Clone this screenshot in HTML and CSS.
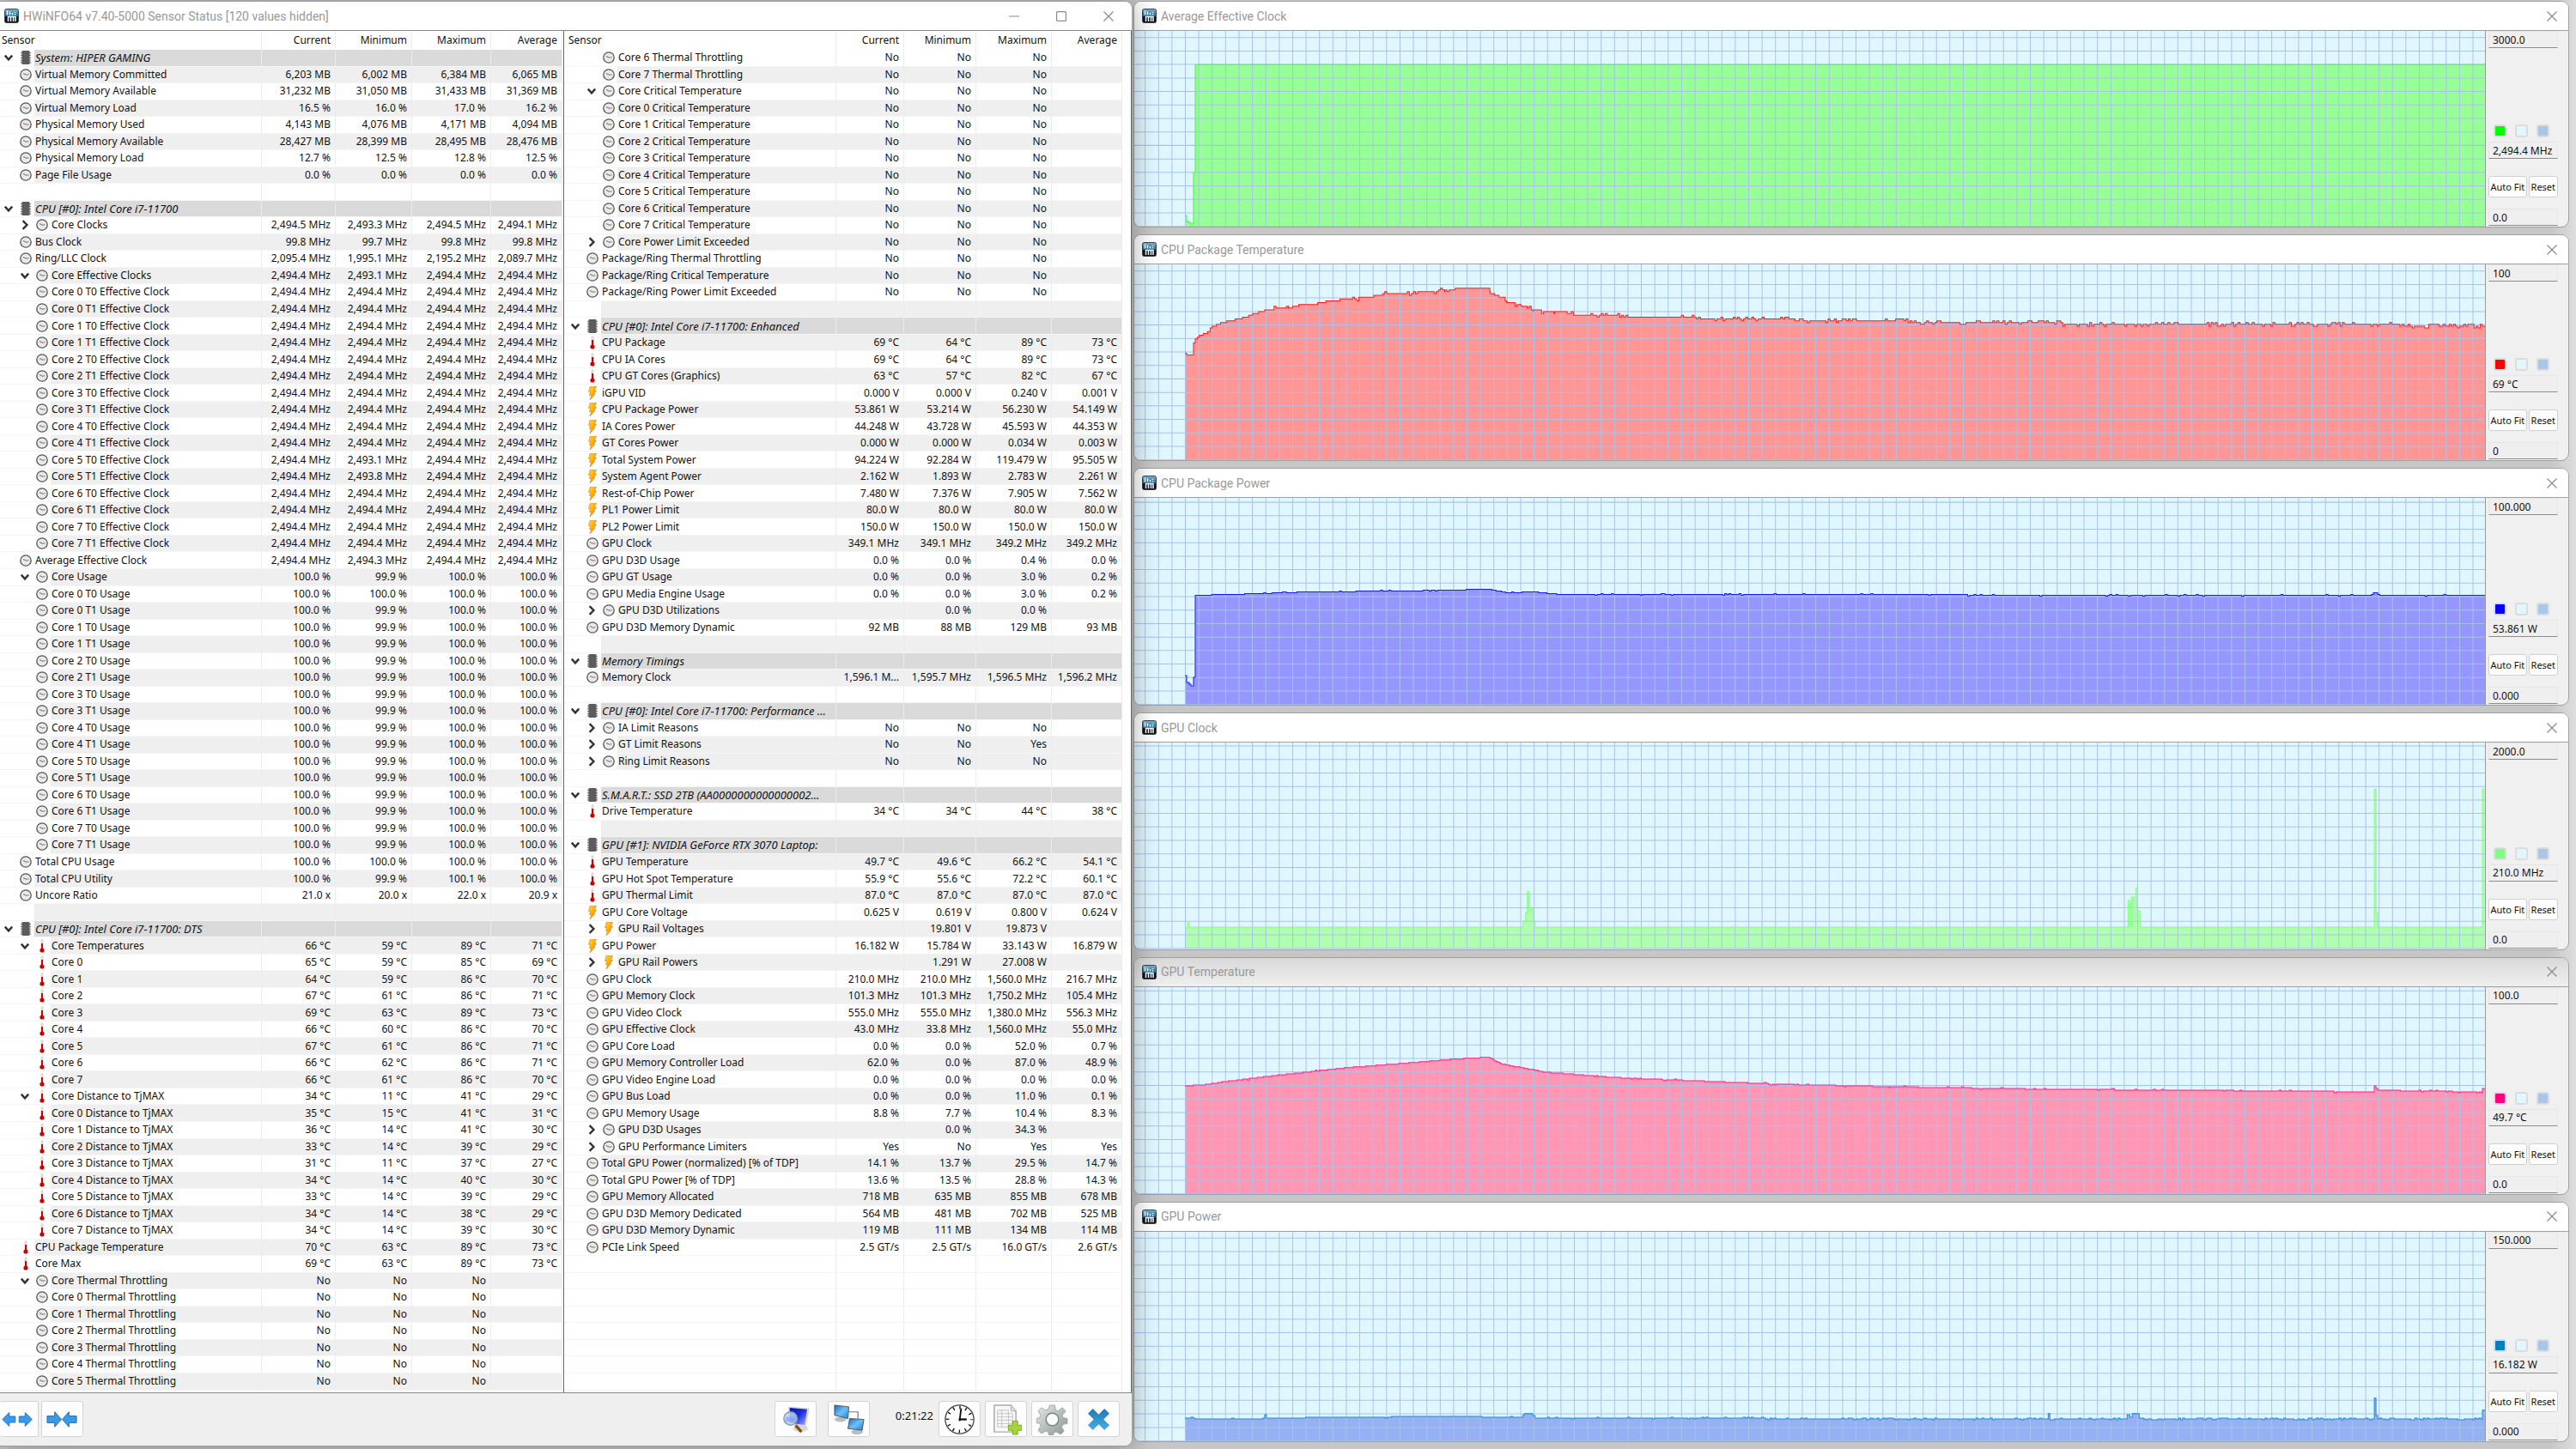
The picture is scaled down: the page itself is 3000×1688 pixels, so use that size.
FILE: index.html
```
<!DOCTYPE html>
<html lang="en">
<head>
  <meta charset="UTF-8">
  <meta name="viewport" content="width=device-width, initial-scale=1.0">
  <title>HWiNFO64 Sensor Status</title>
  <link rel="stylesheet" href="styles.css">
</head>
<body>
  <!-- shared icons -->
  <svg class="defs" aria-hidden="true">
    <defs>
      <linearGradient id="gApp" x1="0" y1="0" x2="0" y2="1">
        <stop offset="0" stop-color="#7fb8d6"/><stop offset=".5" stop-color="#1b6fa3"/><stop offset=".52" stop-color="#0b1420"/><stop offset="1" stop-color="#111"/>
      </linearGradient>
      <linearGradient id="gBolt" x1="0" y1="0" x2="1" y2="1">
        <stop offset="0" stop-color="#ffd84a"/><stop offset=".5" stop-color="#ffb000"/><stop offset="1" stop-color="#e87800"/>
      </linearGradient>
      <linearGradient id="gScreen" x1="0" y1="0" x2="1" y2="1">
        <stop offset="0" stop-color="#1668c0"/><stop offset=".5" stop-color="#6fc0f5"/><stop offset="1" stop-color="#1e7fd6"/>
      </linearGradient>
      <linearGradient id="gNavy" x1="0" y1="0" x2="1" y2="1">
        <stop offset="0" stop-color="#0a14a8"/><stop offset=".5" stop-color="#1c2fe0"/><stop offset="1" stop-color="#a8b8ff"/>
      </linearGradient>
      <linearGradient id="gGear" x1="0" y1="0" x2="1" y2="1">
        <stop offset="0" stop-color="#e4e8e8"/><stop offset="1" stop-color="#8e9696"/>
      </linearGradient>
      <linearGradient id="gClose" x1="0" y1="0" x2="0" y2="1">
        <stop offset="0" stop-color="#1f7ab4"/><stop offset="1" stop-color="#46aee4"/>
      </linearGradient>
    </defs>
    <symbol id="app" viewBox="0 0 17 17">
      <rect x=".5" y=".5" width="16" height="16" rx="2" fill="url(#gApp)" stroke="#3a4650"/>
      <path d="M3.500 2.500v5M6.500 3.500v4M9.500 5v2.500M12.500 4v1M12.500 6v1.500" stroke="#fff" stroke-width="1.500"/>
      <path d="M4.500 9v6M7.500 9v6M10.500 9v6M13 9v6M4 9.500h9.500" stroke="#fff" stroke-width="1.500"/>
    </symbol>
    <symbol id="clock" viewBox="0 0 14 14">
      <circle cx="7" cy="7" r="6.200" fill="#e9e9e9" stroke="#555" stroke-width="1.300"/>
      <path d="M4 5.500L7.500 7.200L10.500 6.800" fill="none" stroke="#8a7468" stroke-width="1.100"/>
    </symbol>
    <symbol id="temp" viewBox="0 0 14 16">
      <rect x="5.500" y="0" width="3" height="12" rx="1.500" fill="#dcdcdc"/>
      <rect x="6" y="5" width="2" height="8" fill="#d40000"/>
      <circle cx="7" cy="13" r="2.600" fill="#cc0000"/>
    </symbol>
    <symbol id="bolt" viewBox="0 0 14 16">
      <path d="M4 .5L11.500 0L9.500 5L11.500 5L8.500 9.500L9.800 9.500L4 16L5.500 10.500L3.500 10.500L4.500 6.500L2.500 6.500Z" fill="url(#gBolt)" stroke="#c9862a" stroke-width=".6"/>
    </symbol>
    <symbol id="chip" viewBox="0 0 14 16">
      <path d="M1 2.500h12M1 5.500h12M1 8.500h12M1 11.500h12M1 14h12" stroke="#888" stroke-width="1.300"/>
      <rect x="2.500" y="0" width="9" height="16" rx="1" fill="#5c5c5c"/>
    </symbol>
    <symbol id="open" viewBox="0 0 10 10"><path d="M1.500 3L5 7L8.500 3" fill="none" stroke="#333" stroke-width="2"/></symbol>
    <symbol id="shut" viewBox="0 0 10 10"><path d="M3 1L7 5L3 9" fill="none" stroke="#333" stroke-width="2"/></symbol>
    <symbol id="close" viewBox="0 0 12 12"><path d="M.5 .5L11.500 11.500M11.500 .5L.5 11.500" fill="none" stroke="#8a8a8a" stroke-width="1.200"/></symbol>
  </svg>

  <main class="sensors">
    <header class="titlebar">
      <svg class="app-icon"><use href="#app"/></svg>
      <h1>HWiNFO64 v7.40-5000 Sensor Status [120 values hidden]</h1>
      <div class="caption">
        <button aria-label="Minimize"><svg viewBox="0 0 12 12"><path d="M0 6h12" stroke="#8a8a8a"/></svg></button>
        <button aria-label="Maximize"><svg viewBox="0 0 12 12"><rect x=".6" y=".6" width="10.800" height="10.800" rx="1" fill="none" stroke="#8a8a8a" stroke-width="1.200"/></svg></button>
        <button aria-label="Close"><svg><use href="#close"/></svg></button>
      </div>
    </header>

    <div class="panes">
      <div class="pane pane-left"><table id="left"></table></div>
      <div class="pane pane-right"><table id="right"></table></div>
    </div>

    <footer class="toolbar">
      <button class="tool tool-edge" aria-label="Expand columns">
        <svg viewBox="0 0 42 20"><path d="M1 10L10 1V6H18V14H10V19ZM40 10L31 1V6H23V14H31V19Z" fill="#3a9ae8" stroke="#1c6cb4"/></svg>
      </button>
      <button class="tool" aria-label="Shrink columns">
        <svg viewBox="0 0 38 20"><path d="M18 10L10 1V6H1V14H10V19ZM19 10L27 1V6H36V14H27V19Z" fill="#3a9ae8" stroke="#1c6cb4"/></svg>
      </button>
      <span class="spacer"></span>
      <button class="tool tool-search" aria-label="Sensor details">
        <svg viewBox="0 0 34 34">
          <ellipse cx="23" cy="28" rx="9" ry="4" fill="#d8d8d8"/>
          <path d="M9 2L33 4L29 26L9 22Z" fill="#e6e6ea" stroke="#bbb" stroke-width=".6"/>
          <path d="M10 3L31 5L28 24L10 21Z" fill="url(#gNavy)"/>
          <path d="M17 24L24 32" stroke="#8a4b14" stroke-width="3.500"/>
          <circle cx="11" cy="16" r="8" fill="#bcd6f4" fill-opacity=".85" stroke="#8598b4" stroke-width="1.500"/>
          <path d="M5 14h12v6H5Z" fill="#7c9cf0" opacity=".6"/>
        </svg>
      </button>
      <button class="tool tool-net" aria-label="Remote sensors">
        <svg viewBox="0 0 38 36">
          <path d="M18 9h12v8" fill="none" stroke="#777" stroke-width="1.200"/>
          <ellipse cx="9" cy="18" rx="7" ry="3" fill="#b9bdc0"/><ellipse cx="29" cy="33" rx="7" ry="3" fill="#b9bdc0"/>
          <path d="M2 1L19 3L18 17L2 13Z" fill="url(#gScreen)" stroke="#555"/>
          <path d="M20 17L37 18L35 31L18 29Z" fill="url(#gScreen)" stroke="#555"/>
        </svg>
      </button>
      <time class="elapsed">0:21:22</time>
      <button class="tool" aria-label="Reset clock">
        <svg viewBox="0 0 40 40">
          <circle cx="20" cy="20" r="18" fill="#fff" stroke="#444" stroke-width="1.400"/>
          <circle cx="20" cy="20" r="15" fill="none" stroke="#111" stroke-width="4" stroke-dasharray="1.500 6.354" stroke-dashoffset=".75"/>
          <path d="M20 22L22 6" stroke="#111" stroke-width="2"/><path d="M19 20h10" stroke="#111" stroke-width="2.500"/>
        </svg>
      </button>
      <button class="tool" aria-label="Start logging">
        <svg viewBox="0 0 36 38">
          <path d="M4 2h20l6 7v25H4Z" fill="#f8f8f8" stroke="#aaa" stroke-width="1.500"/>
          <path d="M24 2v7h6" fill="#ddd" stroke="#aaa"/>
          <path d="M8 8h13M8 12h18M8 16h18M8 20h18M8 24h18M8 28h18M8 8v20M13 8v20M21 8v20M26 12v16" stroke="#c4c4c4"/>
          <path d="M26 21h6v5h5v6h-5v5h-6v-5h-5v-6h5Z" fill="#a5d63c" stroke="#74a81c"/>
        </svg>
      </button>
      <button class="tool" aria-label="Settings">
        <svg viewBox="0 0 38 38">
          <g fill="url(#gGear)" stroke="#8b9393" stroke-width=".7">
            <path d="M16 2h6l1 6 3 1 5-4 4 4-4 5 1 3 5 1v6l-5 1-2 3 3 5-4 4-5-3-3 1-1 3h-5l-1-4-3-1-5 3-4-4 3-5-1-3-4-1v-5l4-1 1-3-3-5 4-4 5 3 3-1Z"/>
          </g>
          <circle cx="19" cy="19" r="7.500" fill="#fdfdfd" stroke="#7a8282" stroke-width="1.500"/>
        </svg>
      </button>
      <button class="tool" aria-label="Close sensors">
        <svg viewBox="0 0 28 28"><path d="M7 1L14 8L21 1L27 7L20 14L27 21L21 27L14 20L7 27L1 21L8 14L1 7Z" fill="url(#gClose)"/></svg>
      </button>
    </footer>
  </main>

  <section class="graphs" id="graphs"></section>

  <script src="app.js"></script>
</body>
</html>
```
FILE: styles.css
```
* {
  box-sizing: border-box;
}

body {
  margin: 0;
  height: 100vh;
  display: grid;
  grid-template-columns: 44% 1fr;
  background: linear-gradient(to right, #c6c6c6 99%, #dedede);
  font-family: "Noto Sans", sans-serif;
  font-size: 12px;
  color: #111;
  overflow: hidden;
}

button,
input {
  font: inherit;
  color: inherit;
}

.defs {
  position: absolute;
  width: 0;
  height: 0;
}

/* windows */
.sensors,
.graph {
  background: #f0f0f0;
  border: 1px solid #a0a0a0;
  overflow: hidden;
}

.sensors {
  position: relative;
  z-index: 1;
  margin: 1px 1px 3px 0;
  border-left: 0;
  border-radius: 0 9px 9px 0;
  display: grid;
  grid-template-rows: 33px 1fr 61px;
  min-height: 0;
  box-shadow: 0 0 32px rgba(0, 0, 0, .35);
}

.titlebar {
  display: flex;
  align-items: center;
  background: #fff;
  border-bottom: 1px solid #a0a0a0;
  padding-left: 9px;
}

.titlebar h1,
.titlebar h2 {
  margin: 0;
  flex: 1;
  font-family: Roboto, "Open Sans", sans-serif;
  font-size: 14px;
  font-weight: 400;
  color: #999;
  white-space: nowrap;
}

.app-icon {
  width: 17px;
  height: 17px;
  margin-right: 5px;
}

.sensors .titlebar {
  padding-left: 5px;
  border-bottom: 0;
}

.caption {
  display: flex;
}

.caption button {
  border: 0;
  background: none;
  width: 55px;
  padding: 0;
}

.graph .caption button {
  width: 38px;
}

.caption svg {
  width: 12px;
  height: 12px;
  display: block;
  margin: auto;
}

/* sensor lists */
.panes {
  display: grid;
  grid-template-columns: 657fr 661fr;
  border-top: 1px solid #888;
  border-bottom: 1px solid #888;
  background: #fff;
  min-height: 0;
}

.pane {
  min-width: 0;
  min-height: 0;
  padding-bottom: 2px;
  border-right: 1px solid #666;
}

.pane-left {
  --start: 0px;
  padding-right: 1px;
}

.pane-right {
  --start: 3px;
  padding-right: 10px;
}

.pane table {
  width: 100%;
  height: 100%;
  table-layout: fixed;
  border-spacing: 0;
}

.pane th,
.pane td {
  height: 19px;
  padding: 0 5px 0 0;
  border-right: 1px solid #ececec;
  border-bottom: 1px solid #f5f5f5;
  text-align: right;
  font-weight: 400;
  line-height: 16px;
  white-space: nowrap;
  overflow: hidden;
}

.pane thead th {
  height: 22px;
  border-bottom: 0;
}

.pane thead th:first-child {
  text-align: left;
  padding-left: calc(var(--start) + 2px);
}

.pane-left .c1 { width: 86px; }
.pane-left .c2 { width: 89px; }
.pane-left .c3 { width: 92px; }
.pane-left .c4 { width: 83px; }
.pane-right .c1 { width: 79px; }
.pane-right .c2 { width: 84px; }
.pane-right .c3 { width: 88px; }
.pane-right .c4 { width: 82px; }

.pane tbody th {
  text-align: left;
  padding: 0 0 0 calc(var(--start) + var(--indent));
  background: linear-gradient(to right, #fff calc(var(--start) + var(--indent) + 37px), var(--stripe) 0);
}

.pane td {
  background: var(--stripe);
}

.pane tbody tr {
  --indent: 3px;
  --stripe: #fff;
}

.pane tbody tr.nested {
  --indent: 22px;
}

.pane tbody tr.shade {
  --stripe: #efefef;
}

.pane tbody tr.group {
  --stripe: #dadada;
}

.group .label {
  font-size: 13px;
  font-style: italic;
}

.name {
  display: flex;
  align-items: center;
}

.toggle {
  width: 13px;
  height: 16px;
  margin-right: 7px;
  padding: 0;
  border: 0;
  background: none;
}

.toggle svg {
  display: block;
  width: 12px;
  height: 12px;
  margin: auto;
}

.icon {
  width: 14px;
  height: 16px;
  margin-right: 4px;
}

/* toolbar */
.toolbar {
  display: flex;
  align-items: flex-start;
  padding: 9px 14px 0 0;
  background: #efefef;
}

.tool {
  width: 49px;
  height: 42px;
  margin-right: 5px;
  padding: 0;
  border: 1px solid #d4d4d4;
  border-radius: 3px;
  background: #fdfdfd;
  display: flex;
  align-items: center;
  justify-content: center;
}

.tool:last-child {
  margin-right: 0;
}

.tool-edge {
  width: 45px;
  margin-right: 3px;
  padding-right: 4px;
  border-left: 0;
}

.tool svg {
  width: 37px;
  height: 37px;
}

.tool-search svg {
  width: 33px;
}

.tool:last-child svg {
  width: 27px;
}

.tool-search {
  margin-right: 13px;
}

.tool-net {
  margin-right: 30px;
}

.elapsed {
  font-size: 13px;
  line-height: 34px;
  margin-right: 6px;
}

.spacer {
  flex: 1;
}

/* graph windows */
.graphs {
  display: grid;
  grid-template-rows: 264fr 264fr 277fr 276fr 277fr 280fr;
  gap: 8px;
  padding: 1px 8px 8px 0;
  min-height: 0;
}

.graph {
  display: grid;
  grid-template-rows: 34px 1fr;
  border-radius: 9px;
  min-height: 0;
}

.graph:nth-child(5) .titlebar {
  background: linear-gradient(#d8d8d8, #f0f0f0);
}

.graph-body {
  display: grid;
  grid-template-columns: 1fr 96px;
  min-height: 0;
}

.plot {
  background: #e0f7ff;
  border-right: 1px solid #999;
  min-height: 0;
  overflow: hidden;
}

.plot svg {
  display: block;
  width: 100%;
  height: 100%;
}

.grid-lines {
  stroke: #a9c3e8;
  stroke-width: 1px;
  fill: none;
}

.series {
  stroke: none;
}

.trace {
  fill: none;
  stroke-width: 1px;
}

.side {
  display: flex;
  flex-direction: column;
  padding: 0 12px 1px 3px;
}

.side input {
  width: 100%;
  height: 20px;
  padding: 0 4px;
  border: 1px solid #e6e6e6;
  border-bottom-color: #8c8c8c;
  background: #efefef;
}

.side .top {
  margin-bottom: auto;
}

.swatches {
  display: flex;
  gap: 10px;
  padding: 0 0 5px 6px;
}

.swatches button {
  width: 15px;
  height: 15px;
  padding: 0;
  border: 2px solid #dcdcdc;
  border-radius: 3px;
}

.buttons {
  display: flex;
  gap: 2px;
  margin: 20px 0 13px;
}

.buttons button {
  flex: 35 1 0;
  height: 25px;
  padding: 0;
  border: 1px solid #d0d0d0;
  border-radius: 3px;
  background: #fdfdfd;
  font-size: 11px;
  white-space: nowrap;
}

.buttons button:first-child {
  flex-grow: 46;
}
```
FILE: app.js
```
const icon = (id, cls) => `<svg class="${cls || 'icon'}"><use href="#${id}"/></svg>`;

// ---- sensor rows: kind, name, current, minimum, maximum, average ----
// kinds: G group, c/t/b leaf, +x collapsed, -x expanded, >x child
const left = [];
const right = [];
const add = (list, text) => text.trim().split('\n').forEach(l => list.push(l.trim().split('|')));

add(left, `G|System: HIPER GAMING
c|Virtual Memory Committed|6,203 MB|6,002 MB|6,384 MB|6,065 MB
c|Virtual Memory Available|31,232 MB|31,050 MB|31,433 MB|31,369 MB
c|Virtual Memory Load|16.5 %|16.0 %|17.0 %|16.2 %
c|Physical Memory Used|4,143 MB|4,076 MB|4,171 MB|4,094 MB
c|Physical Memory Available|28,427 MB|28,399 MB|28,495 MB|28,476 MB
c|Physical Memory Load|12.7 %|12.5 %|12.8 %|12.5 %
c|Page File Usage|0.0 %|0.0 %|0.0 %|0.0 %
_
G|CPU [#0]: Intel Core i7-11700
+c|Core Clocks|2,494.5 MHz|2,493.3 MHz|2,494.5 MHz|2,494.1 MHz
c|Bus Clock|99.8 MHz|99.7 MHz|99.8 MHz|99.8 MHz
c|Ring/LLC Clock|2,095.4 MHz|1,995.1 MHz|2,195.2 MHz|2,089.7 MHz
-c|Core Effective Clocks|2,494.4 MHz|2,493.1 MHz|2,494.4 MHz|2,494.4 MHz`);

const clk = '2,494.4 MHz';
const lowClocks = { '5T0': '2,493.1 MHz', '5T1': '2,493.8 MHz' };
for (let i = 0; i < 16; i++) {
  const c = i >> 1, t = i & 1;
  left.push(['>c', `Core ${c} T${t} Effective Clock`, clk, lowClocks[`${c}T${t}`] || clk, clk, clk]);
}
add(left, `c|Average Effective Clock|2,494.4 MHz|2,494.3 MHz|2,494.4 MHz|2,494.4 MHz
-c|Core Usage|100.0 %|99.9 %|100.0 %|100.0 %`);
for (let i = 0; i < 16; i++) {
  left.push(['>c', `Core ${i >> 1} T${i & 1} Usage`, '100.0 %', i ? '99.9 %' : '100.0 %', '100.0 %', '100.0 %']);
}
add(left, `c|Total CPU Usage|100.0 %|100.0 %|100.0 %|100.0 %
c|Total CPU Utility|100.0 %|99.9 %|100.1 %|100.0 %
c|Uncore Ratio|21.0 x|20.0 x|22.0 x|20.9 x
_
G|CPU [#0]: Intel Core i7-11700: DTS`);

const degrees = (kind, name, v) => left.push([kind, name, ...v.map(n => n + ' °C')]);
degrees('-t', 'Core Temperatures', [66, 59, 89, 71]);
[[65, 59, 85, 69], [64, 59, 86, 70], [67, 61, 86, 71], [69, 63, 89, 73],
 [66, 60, 86, 70], [67, 61, 86, 71], [66, 62, 86, 71], [66, 61, 86, 70]]
  .forEach((v, i) => degrees('>t', `Core ${i}`, v));
degrees('-t', 'Core Distance to TjMAX', [34, 11, 41, 29]);
[[35, 15, 41, 31], [36, 14, 41, 30], [33, 14, 39, 29], [31, 11, 37, 27],
 [34, 14, 40, 30], [33, 14, 39, 29], [34, 14, 38, 29], [34, 14, 39, 30]]
  .forEach((v, i) => degrees('>t', `Core ${i} Distance to TjMAX`, v));
degrees('t', 'CPU Package Temperature', [70, 63, 89, 73]);
degrees('t', 'Core Max', [69, 63, 89, 73]);

const no = (list, kind, name) => list.push([kind, name, 'No', 'No', 'No', '']);
no(left, '-c', 'Core Thermal Throttling');
for (let i = 0; i < 6; i++) no(left, '>c', `Core ${i} Thermal Throttling`);

no(right, '>c', 'Core 6 Thermal Throttling');
no(right, '>c', 'Core 7 Thermal Throttling');
no(right, '-c', 'Core Critical Temperature');
for (let i = 0; i < 8; i++) no(right, '>c', `Core ${i} Critical Temperature`);
no(right, '+c', 'Core Power Limit Exceeded');
no(right, 'c', 'Package/Ring Thermal Throttling');
no(right, 'c', 'Package/Ring Critical Temperature');
no(right, 'c', 'Package/Ring Power Limit Exceeded');
add(right, `_
G|CPU [#0]: Intel Core i7-11700: Enhanced
t|CPU Package|69 °C|64 °C|89 °C|73 °C
t|CPU IA Cores|69 °C|64 °C|89 °C|73 °C
t|CPU GT Cores (Graphics)|63 °C|57 °C|82 °C|67 °C
b|iGPU VID|0.000 V|0.000 V|0.240 V|0.001 V
b|CPU Package Power|53.861 W|53.214 W|56.230 W|54.149 W
b|IA Cores Power|44.248 W|43.728 W|45.593 W|44.353 W
b|GT Cores Power|0.000 W|0.000 W|0.034 W|0.003 W
b|Total System Power|94.224 W|92.284 W|119.479 W|95.505 W
b|System Agent Power|2.162 W|1.893 W|2.783 W|2.261 W
b|Rest-of-Chip Power|7.480 W|7.376 W|7.905 W|7.562 W
b|PL1 Power Limit|80.0 W|80.0 W|80.0 W|80.0 W
b|PL2 Power Limit|150.0 W|150.0 W|150.0 W|150.0 W
c|GPU Clock|349.1 MHz|349.1 MHz|349.2 MHz|349.2 MHz
c|GPU D3D Usage|0.0 %|0.0 %|0.4 %|0.0 %
c|GPU GT Usage|0.0 %|0.0 %|3.0 %|0.2 %
c|GPU Media Engine Usage|0.0 %|0.0 %|3.0 %|0.2 %
+c|GPU D3D Utilizations||0.0 %|0.0 %|
c|GPU D3D Memory Dynamic|92 MB|88 MB|129 MB|93 MB
_
G|Memory Timings
c|Memory Clock|1,596.1 M...|1,595.7 MHz|1,596.5 MHz|1,596.2 MHz
_
G|CPU [#0]: Intel Core i7-11700: Performance ...
+c|IA Limit Reasons|No|No|No|
+c|GT Limit Reasons|No|No|Yes|
+c|Ring Limit Reasons|No|No|No|
_
G|S.M.A.R.T.: SSD 2TB (AA0000000000000002...
t|Drive Temperature|34 °C|34 °C|44 °C|38 °C
_
G|GPU [#1]: NVIDIA GeForce RTX 3070 Laptop:
t|GPU Temperature|49.7 °C|49.6 °C|66.2 °C|54.1 °C
t|GPU Hot Spot Temperature|55.9 °C|55.6 °C|72.2 °C|60.1 °C
t|GPU Thermal Limit|87.0 °C|87.0 °C|87.0 °C|87.0 °C
b|GPU Core Voltage|0.625 V|0.619 V|0.800 V|0.624 V
+b|GPU Rail Voltages||19.801 V|19.873 V|
b|GPU Power|16.182 W|15.784 W|33.143 W|16.879 W
+b|GPU Rail Powers||1.291 W|27.008 W|
c|GPU Clock|210.0 MHz|210.0 MHz|1,560.0 MHz|216.7 MHz
c|GPU Memory Clock|101.3 MHz|101.3 MHz|1,750.2 MHz|105.4 MHz
c|GPU Video Clock|555.0 MHz|555.0 MHz|1,380.0 MHz|556.3 MHz
c|GPU Effective Clock|43.0 MHz|33.8 MHz|1,560.0 MHz|55.0 MHz
c|GPU Core Load|0.0 %|0.0 %|52.0 %|0.7 %
c|GPU Memory Controller Load|62.0 %|0.0 %|87.0 %|48.9 %
c|GPU Video Engine Load|0.0 %|0.0 %|0.0 %|0.0 %
c|GPU Bus Load|0.0 %|0.0 %|11.0 %|0.1 %
c|GPU Memory Usage|8.8 %|7.7 %|10.4 %|8.3 %
+c|GPU D3D Usages||0.0 %|34.3 %|
+c|GPU Performance Limiters|Yes|No|Yes|Yes
c|Total GPU Power (normalized) [% of TDP]|14.1 %|13.7 %|29.5 %|14.7 %
c|Total GPU Power [% of TDP]|13.6 %|13.5 %|28.8 %|14.3 %
c|GPU Memory Allocated|718 MB|635 MB|855 MB|678 MB
c|GPU D3D Memory Dedicated|564 MB|481 MB|702 MB|525 MB
c|GPU D3D Memory Dynamic|119 MB|111 MB|134 MB|114 MB
c|PCIe Link Speed|2.5 GT/s|2.5 GT/s|16.0 GT/s|2.6 GT/s`);
while (right.length < 80) right.push(['']);

const icons = { c: 'clock', t: 'temp', b: 'bolt', G: 'chip' };

function row([kind, name, ...values], shaded) {
  const cells = [0, 1, 2, 3].map(i => `<td>${values[i] || ''}</td>`).join('');
  const cls = [shaded && 'shade', kind === 'G' && 'group', /^[-+>]/.test(kind) && 'nested'].filter(Boolean).join(' ');
  if (!name) return `<tr class="${cls}"><th></th>${cells}</tr>`;
  let toggle = '<span class="toggle"></span>';
  if (/^[G+-]/.test(kind)) {
    toggle = `<button class="toggle" aria-label="Toggle ${name}">${icon(kind[0] === '+' ? 'shut' : 'open', 'arrow')}</button>`;
  }
  return `<tr class="${cls}"><th scope="row"><div class="name">${toggle}${icon(icons[kind.slice(-1)])}<span class="label">${name}</span></div></th>${cells}</tr>`;
}

function fill(id, rows, isShaded) {
  document.getElementById(id).innerHTML =
    '<thead><tr><th>Sensor</th><th class="c1">Current</th><th class="c2">Minimum</th><th class="c3">Maximum</th><th class="c4">Average</th></tr></thead>' +
    '<tbody>' + rows.map((r, i) => row(r, isShaded(i))).join('') + '</tbody>';
}
fill('left', left, i => i % 2 === 1);
fill('right', right, i => i < 72 && (i < 42 ? i % 2 === 1 : i % 2 === 0));

// ---- graphs: points are [x, height above the base] on a 1574 wide plot ----
const W = 1574;
const STEP = 1563 / 100;
let seed = 7;
const rnd = () => (seed = (seed * 16807) % 2147483647) / 2147483647;

// samples between the knots, rounded to the sensor's resolution
function sample(knots, unit, noise) {
  const out = [];
  for (let k = 0; k < knots.length - 1; k++) {
    const [x0, y0] = knots[k], [x1, y1] = knots[k + 1];
    for (let x = x0; x < x1; x += 2.4) {
      const n = rnd() < noise * Math.min(1, x / 900) ? (rnd() < .6 ? unit : -unit) : 0;
      out.push([x, Math.round((y0 + (y1 - y0) * (x - x0) / (x1 - x0)) / unit) * unit + n]);
    }
  }
  return out;
}

const graphs = [
  { name: 'Average Effective Clock', h: 227, top: '3000.0', value: '2,494.4 MHz', bottom: '0.0',
    color: '#00ff00', fill: '#96ff96', line: '#3cff3c',
    pts: [[59, 13], [61, 6], [64, 5], [66, 4], [69, 63], [71, 188]] },
  { name: 'CPU Package Temperature', h: 227, top: '100', value: '69 °C', bottom: '0',
    color: '#ff0000', fill: '#ff9696', line: '#ff1c1c',
    pts: [[59, 124], [61, 122], [69, 136], ...sample([[71, 142], [78, 145], [86, 150], [91, 155], [103, 160], [126, 165], [140, 170], [158, 175], [182, 177], [192, 180], [216, 182], [225, 185], [240, 186], [272, 189], [287, 192], [352, 196], [362, 198], [412, 200], [415, 194], [425, 190], [434, 183], [453, 179], [465, 174], [490, 172], [520, 168], [650, 165], [820, 162], [950, 160], [1130, 158], [1350, 157], [1574, 156]], 2.1, .4)] },
  { name: 'CPU Package Power', h: 240, top: '100.000', value: '53.861 W', bottom: '0.000',
    color: '#0000ff', fill: '#9696ff', line: '#1a1aff',
    pts: [[59, 34], [61, 26], [64, 24], [66, 22], [69, 32], ...sample([[71, 127], [146, 129], [203, 131], [310, 132], [412, 134], [423, 132], [435, 130], [464, 131], [485, 129], [496, 128], [1443, 127]], 1, .1), [1444, 130], ...sample([[1449, 127], [1574, 127]], 1, .1)] },
  { name: 'GPU Clock', h: 239, top: '2000.0', value: '210.0 MHz', bottom: '0.0',
    color: '#80ff80', fill: '#b0ffae', line: '#80ff80',
    pts: [[59, 25], [62, 30], [64, 25], [453, 32], [456, 42], [458, 66], [460, 45], [463, 47], [465, 32], [467, 25],
      [1158, 56], [1160, 25], [1162, 60], [1165, 36], [1167, 70], [1169, 44], [1172, 25], [1445, 185], [1447, 42], [1449, 25], [1571, 185]] },
  { name: 'GPU Temperature', h: 239, top: '100.0', value: '49.7 °C', bottom: '0.0',
    color: '#ff0080', fill: '#ff96b4', line: '#ff1c8c',
    pts: [...sample([[59, 125], [78, 126], [105, 130], [170, 138], [248, 146], [325, 152], [372, 156], [412, 158], [428, 150], [478, 141], [555, 135], [650, 131], [750, 127], [880, 124], [1070, 121], [1350, 119], [1444, 118]], 1, .08), [1445, 125], [1447, 122], ...sample([[1449, 120], [1500, 119], [1570, 118]], 1, .15), [1571, 122]] },
  { name: 'GPU Power', h: 242, top: '150.000', value: '16.182 W', bottom: '0.000',
    color: '#0080c0', fill: '#96b0f4', line: '#1c8cd0',
    pts: [...sample([[59, 27], [80, 26], [151, 26]], 1, .3), [152, 31], ...sample([[154, 27], [242, 28], [357, 29], [450, 28]], 1, .1), [453, 31], [455, 32], [464, 30], ...sample([[467, 27], [1000, 26], [1064, 26]], 1, .3), [1065, 32], ...sample([[1067, 26], [1156, 26]], 1, .3), [1157, 31], [1160, 28], [1163, 32], [1171, 27],
      ...sample([[1176, 26], [1444, 26]], 1, .4), [1445, 50], [1447, 30], ...sample([[1449, 26], [1570, 26]], 1, .4), [1571, 36]] },
];

function plot(g) {
  let d = '';
  g.pts.forEach(([x, y], i) => {
    d += i ? `H${x.toFixed(1)}V${(g.h - y).toFixed(1)}` : `M${x} ${g.h - y}`;
  });
  d += `H${W}`;
  let lines = '';
  for (let x = W - 14; x > 0; x -= STEP) lines += `M${x.toFixed(1)} 0V${g.h}`;
  for (let y = g.h - .5; y > 0; y -= STEP) lines += `M0 ${y.toFixed(1)}H${W}`;
  return `<svg viewBox="0 0 ${W} ${g.h}" preserveAspectRatio="none">
    <path class="series" fill="${g.fill}" d="${d}V${g.h}H${g.pts[0][0]}Z"/>
    <path class="grid-lines" d="${lines}"/>
    <path class="trace" stroke="${g.line}" d="${d}"/></svg>`;
}

document.getElementById('graphs').innerHTML = graphs.map(g => `
  <article class="graph">
    <header class="titlebar">${icon('app', 'app-icon')}<h2>${g.name}</h2>
      <div class="caption"><button aria-label="Close ${g.name}"><svg><use href="#close"/></svg></button></div></header>
    <div class="graph-body">
      <div class="plot">${plot(g)}</div>
      <div class="side">
        <input class="top" aria-label="${g.name} maximum" value="${g.top}">
        <div class="swatches">
          <button aria-label="Line colour" style="background:${g.color}"></button>
          <button aria-label="Background colour" style="background:#e0f7ff"></button>
          <button aria-label="Grid colour" style="background:#a9c5e8"></button>
        </div>
        <input aria-label="${g.name} value" value="${g.value}" readonly>
        <div class="buttons"><button>Auto Fit</button><button>Reset</button></div>
        <input aria-label="${g.name} minimum" value="${g.bottom}">
      </div>
    </div>
  </article>`).join('');
```
